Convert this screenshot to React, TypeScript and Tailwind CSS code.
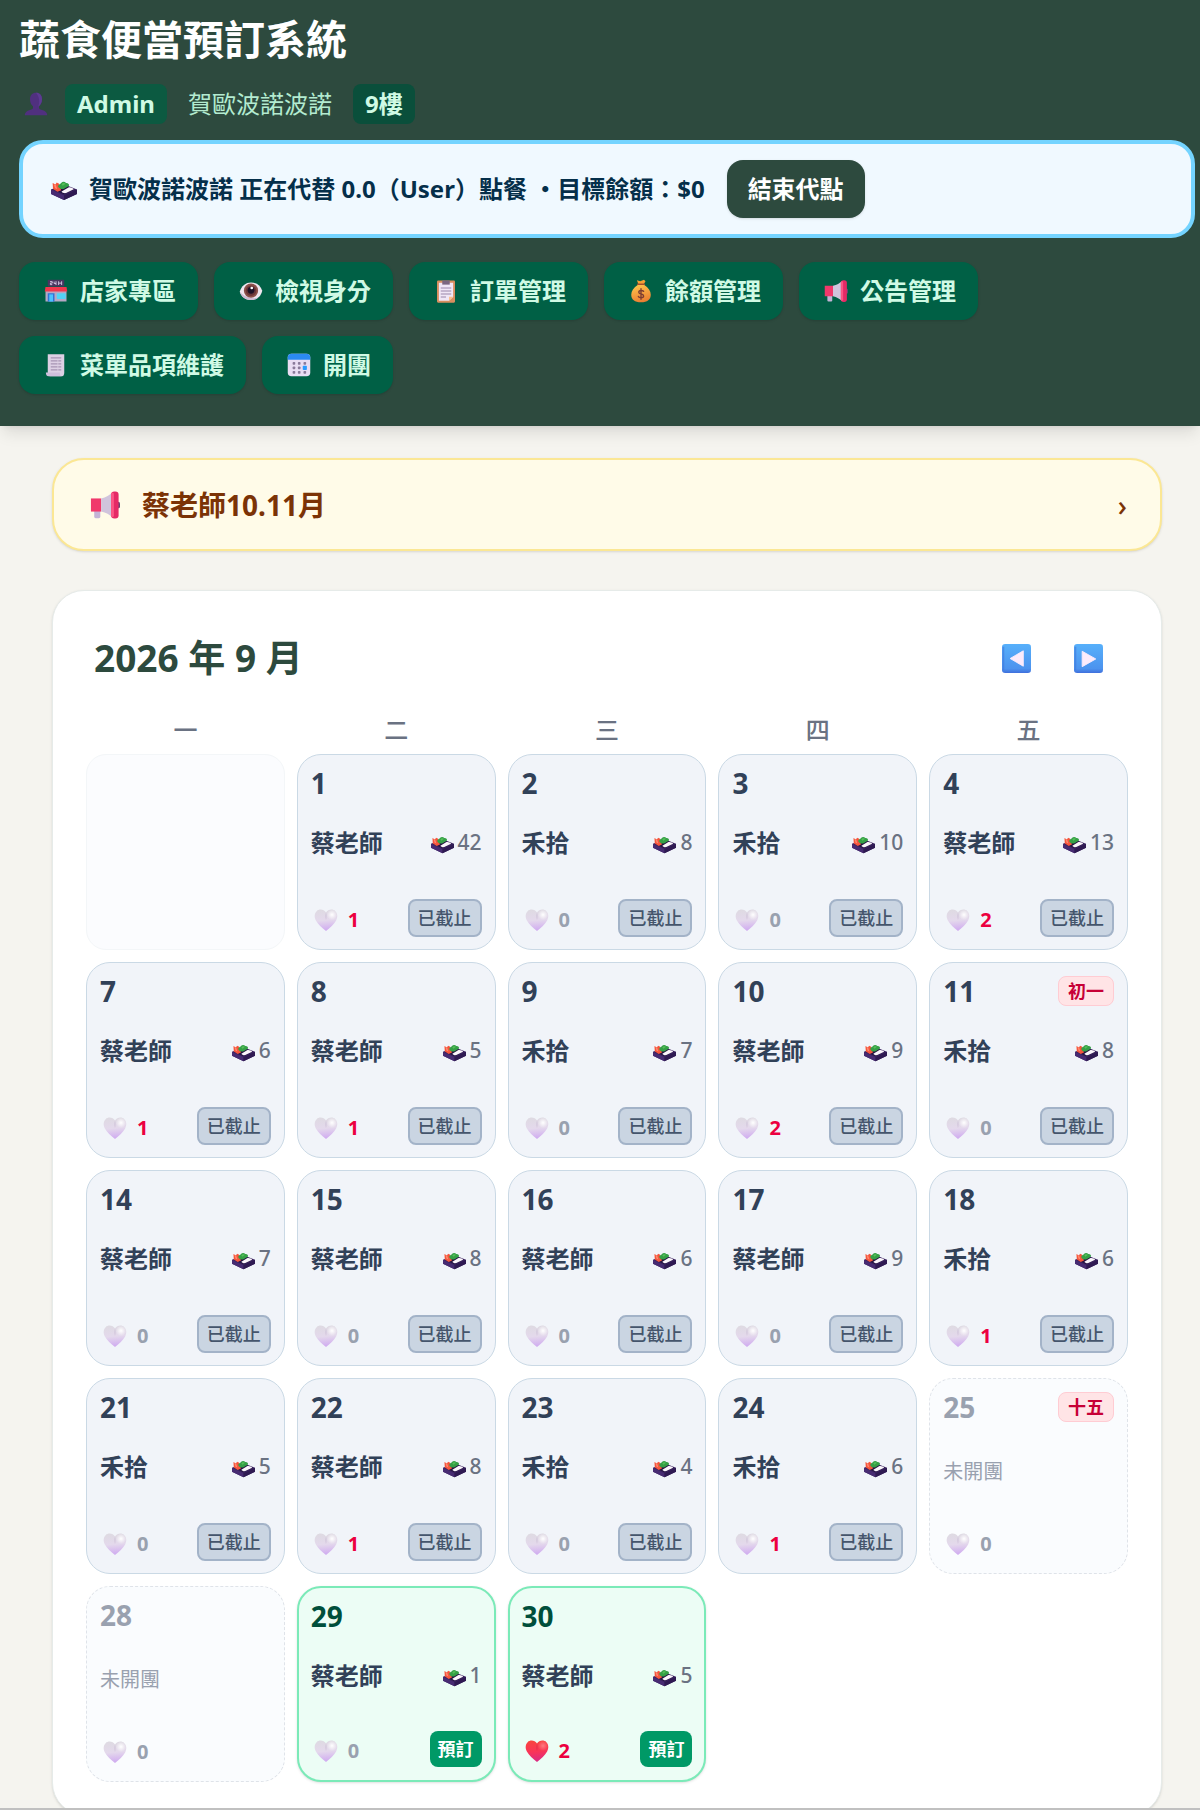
import type { ReactNode } from 'react';
import { clsx } from 'clsx';

type DayStatus = 'closed' | 'open' | 'none';

interface Day {
  date: number;
  status: DayStatus;
  shop?: string;
  orders?: number;
  likes: number;
  liked?: boolean;
  lunar?: string;
}

const closed = (date: number, shop: string, orders: number, likes: number, lunar?: string): Day => ({
  date,
  status: 'closed',
  shop,
  orders,
  likes,
  lunar,
});

const days: Day[] = [
  closed(1, '蔡老師', 42, 1),
  closed(2, '禾拾', 8, 0),
  closed(3, '禾拾', 10, 0),
  closed(4, '蔡老師', 13, 2),
  closed(7, '蔡老師', 6, 1),
  closed(8, '蔡老師', 5, 1),
  closed(9, '禾拾', 7, 0),
  closed(10, '蔡老師', 9, 2),
  closed(11, '禾拾', 8, 0, '初一'),
  closed(14, '蔡老師', 7, 0),
  closed(15, '蔡老師', 8, 0),
  closed(16, '蔡老師', 6, 0),
  closed(17, '蔡老師', 9, 0),
  closed(18, '禾拾', 6, 1),
  closed(21, '禾拾', 5, 0),
  closed(22, '蔡老師', 8, 1),
  closed(23, '禾拾', 4, 0),
  closed(24, '禾拾', 6, 1),
  { date: 25, status: 'none', likes: 0, lunar: '十五' },
  { date: 28, status: 'none', likes: 0 },
  { date: 29, status: 'open', shop: '蔡老師', orders: 1, likes: 0 },
  { date: 30, status: 'open', shop: '蔡老師', orders: 5, likes: 2, liked: true },
];

const weekdays = ['一', '二', '三', '四', '五'];

function Svg({ className, children }: { className?: string; children: ReactNode }) {
  return (
    <svg viewBox="0 0 32 32" aria-hidden="true" className={clsx('shrink-0', className)}>
      {children}
    </svg>
  );
}

function BentoIcon({ className }: { className?: string }) {
  return (
    <Svg className={className}>
      <path d="M0 16.500 16 10l16 6.500v5.500L16 29.500 0 22z" fill="#3a2260" />
      <path d="M0 16.500 16 24v5.500L0 22z" fill="#472b72" />
      <path d="M16 24 32 16.500V22l-16 7.500z" fill="#2f1a52" />
      <path d="M3 16.500 16 11l13 5.500-13 6z" fill="#241240" />
      <path d="M13 19 21.500 14c2-.8 6 .8 6.500 2.200L18.500 21c-2 .6-5-.6-5.500-2z" fill="#fbf6fc" />
      <path d="M2 8.500l3.500 2L7 8l3 1.500 2.500 8-4.500 2-5.500-3.500z" fill="#f5553c" />
      <path d="M3.500 10l2.500 1 1.500 5-2.500-1z" fill="#ff8a70" />
      <path d="M8.500 12.500c.5-2 3-2.500 4-4 1.500-2 4.500-2 6 0 2.500-.2 4.500 1.500 3.500 3.700L15.500 16c-3.500.4-6-1-7-3.500z" fill="#35a046" />
      <path d="M13 10c1.500-1.700 4-1.700 5-.5l-3.500 2.500z" fill="#56c05a" />
    </Svg>
  );
}

function HeartIcon({ liked }: { liked?: boolean }) {
  const id = liked ? 'heart-on' : 'heart-off';
  return (
    <Svg className="size-6">
      <defs>
        <linearGradient id={id} x1="0.4" y1="0" x2="0.5" y2="1">
          <stop offset="0" stopColor={liked ? '#f8443f' : '#dedae2'} />
          <stop offset="0.5" stopColor={liked ? '#fa3556' : '#e4d9ec'} />
          <stop offset="1" stopColor={liked ? '#d92a86' : '#cfa9f0'} />
        </linearGradient>
        <radialGradient id={`${id}-shine`} cx="0.5" cy="0.5" r="0.5">
          <stop offset="0" stopColor={liked ? '#ff7a80' : '#ffffff'} />
          <stop offset="1" stopColor={liked ? '#ff7a80' : '#ffffff'} stopOpacity="0" />
        </radialGradient>
      </defs>
      <path
        d="M16 6C13.500 1.800 7 .8 3.500 4.200.2 7.500.3 12.500 2.500 16.500 5.300 21.500 10.500 26.500 16 30.500c5.500-4 10.700-9 13.500-14 2.200-4 2.300-9-1-12.300C25 .8 18.500 1.800 16 6z"
        fill={`url(#${id})`}
      />
      <ellipse cx="24" cy="9" rx="7" ry="7" fill={`url(#${id}-shine)`} />
      <path d="M16 6c-1.200 3-1.200 7 0 10 1-3 1-7 0-10z" fill={liked ? '#d52a4c' : '#c7b9d2'} opacity="0.6" />
    </Svg>
  );
}

function MegaphoneIcon({ className }: { className?: string }) {
  return (
    <Svg className={className}>
      <rect x="28" y="12.500" width="4" height="7" rx="2" fill="#6b4674" />
      <path d="M4.500 22h6.500v6.500a1.500 1.500 0 0 1-1.500 1.500H6a1.500 1.500 0 0 1-1.500-1.500z" fill="#c3b3d6" />
      <path d="M1 9h11v14H1z" fill="#f0386b" />
      <path d="M12 9c5-1 9-3.500 12-6.500v27C21 26.500 17 24 12 23z" fill="#d0c4dc" />
      <rect x="22.500" y="1.500" width="8" height="29" rx="3.500" fill="#e52a66" />
      <rect x="22.500" y="3" width="3" height="26" rx="1.500" fill="#fb5584" />
    </Svg>
  );
}

function UserIcon() {
  return (
    <Svg className="size-6">
      <path d="M16 1c5 0 8 3.500 8 8.500 0 4-1.500 7.500-4 9.500v2c0 1.500 1 2 4 3 4.500 1.300 7 3.500 7 7H1c0-3.500 2.500-5.700 7-7 3-1 4-1.500 4-3v-2c-2.500-2-4-5.500-4-9.500C8 4.500 11 1 16 1z" fill="#50307f" />
      <path d="M16 1c5 0 8 3.500 8 8.500 0 4-2 8-5 10 2-6 2-12-3-18.500z" fill="#5d3a92" />
    </Svg>
  );
}

function StoreIcon() {
  return (
    <Svg className="size-6">
      <rect x="5" y="1" width="22" height="9" rx="1" fill="#4a3560" />
      <path d="M8 3.500h3v2H8.500v2H11M13.500 3.500v2.500H16M16 3v5M19.500 3v5M23.500 3v5M19.500 5.500h4" stroke="#d9cde6" strokeWidth="1.200" fill="none" />
      <rect x="2" y="15" width="28" height="15" fill="#b6a8c4" />
      <path d="M2 10.500h28l1 6H1z" fill="#f3364d" />
      <rect x="5" y="19" width="9" height="11" fill="#2f73d8" />
      <rect x="7" y="20.500" width="5" height="9.500" fill="#4cc2ff" />
      <rect x="17" y="19" width="12" height="7.500" rx="1" fill="#52d3f5" />
    </Svg>
  );
}

function EyeIcon() {
  return (
    <Svg className="size-6">
      <path d="M1 17C3 9 9 4.500 16 4.500S29 9 31 15.500C29.500 22.500 24 28 16 28S3 23.500 1 17z" fill="#efe6f0" />
      <path d="M1 17c2 7 8 11 15 11 4 0 7-1.200 9.500-3.500C18 27 8 25 1 17z" fill="#cdb9d3" />
      <circle cx="16" cy="15.500" r="9.500" fill="#8a4f49" />
      <circle cx="16" cy="15.500" r="7" fill="#6a3538" />
      <circle cx="16" cy="15" r="4.500" fill="#1d1127" />
      <circle cx="17" cy="12" r="1.800" fill="#fff" />
    </Svg>
  );
}

function ClipboardIcon() {
  return (
    <Svg className="size-6">
      <rect x="4" y="2" width="24" height="29.500" rx="1.500" fill="#d98e5f" />
      <path d="M6.500 5h19v19l-5.500 5H6.500z" fill="#f0e6f6" />
      <path d="M25.500 23.500 20 29v-5.500z" fill="#fbc08c" />
      <path d="M11 2h10v5.500H11z" fill="#7b6680" />
      <path d="M9 12h14M9 16h14M9 20h14M9 24h7" stroke="#9a86aa" strokeWidth="1.500" />
    </Svg>
  );
}

function MoneyBagIcon() {
  return (
    <Svg className="size-6">
      <defs>
        <linearGradient id="bag" x1="0.3" y1="0" x2="0.6" y2="1">
          <stop offset="0" stopColor="#ffc44a" />
          <stop offset="1" stopColor="#ea7c32" />
        </linearGradient>
      </defs>
      <path d="M10.500 1.500 15 3l5-2 2 2-3 5h-6z" fill="#f7a035" />
      <path d="M12 7.500h8c6 3.500 9 8.500 9 13.500 0 6.500-4.500 10-13 10S3 27.500 3 21c0-5 3-10 9-13.500z" fill="url(#bag)" />
      <path d="M11.500 7h9" stroke="#a6502c" strokeWidth="2" strokeLinecap="round" />
      <path d="M19.500 16.500c-1-1.500-6.500-2-6.500 1.200 0 3 6.500 1.600 6.500 4.800 0 3-6 3-7 .8M16 13v14" stroke="#7c3c32" strokeWidth="1.800" fill="none" strokeLinecap="round" />
    </Svg>
  );
}

function ReceiptIcon() {
  return (
    <Svg className="size-6">
      <path d="M5 1.500h22v24.500c0 3-1 5-3 5H8c-2 0-3-2-3-4z" fill="#ddd0e4" />
      <path d="M2.500 26H21c0 3 1 5 3 5H6c-2.500 0-3.500-2-3.500-5z" fill="#d0bfdc" />
      <path d="M9 6.500h14M9 10.500h14M9 14.500h14M9 18.500h14M9 22.500h14" stroke="#a794b3" strokeWidth="1.600" />
      <path d="M18.500 9v15" stroke="#ddd0e4" strokeWidth="1" />
    </Svg>
  );
}

function CalendarIcon() {
  return (
    <Svg className="size-6">
      <rect x="1" y="1" width="30" height="30" rx="5" fill="#e9ddf3" />
      <path d="M6 1h20a5 5 0 0 1 5 5v3H1V6a5 5 0 0 1 5-5z" fill="#2b8af2" />
      <g fill="#8a7a9a">
        <rect x="7.500" y="12" width="3.500" height="3.500" rx="1" />
        <rect x="14.500" y="12" width="3.500" height="3.500" rx="1" />
        <rect x="22" y="12" width="3.500" height="3.500" rx="1" />
        <rect x="7.500" y="18" width="3.500" height="3.500" rx="1" />
        <rect x="14.500" y="18" width="3.500" height="3.500" rx="1" />
        <rect x="7.500" y="24" width="3.500" height="3.500" rx="1" />
        <rect x="14.500" y="24" width="3.500" height="3.500" rx="1" />
        <rect x="22" y="24" width="3.500" height="3.500" rx="1" />
      </g>
      <rect x="21" y="17" width="5.500" height="5.500" rx="1" fill="#2b9bff" />
    </Svg>
  );
}

function ArrowIcon({ direction }: { direction: 'prev' | 'next' }) {
  return (
    <Svg className="size-[29px]">
      <defs>
        <linearGradient id={`arrow-${direction}`} x1="0" y1="0" x2="0" y2="1">
          <stop offset="0" stopColor="#57b0fb" />
          <stop offset="0.85" stopColor="#4c93ee" />
          <stop offset="1" stopColor="#3f6fdc" />
        </linearGradient>
      </defs>
      <rect width="32" height="32" rx="3.500" fill={`url(#arrow-${direction})`} />
      <path d="M1.500 3v26" stroke="#3f78dd" strokeWidth="2" opacity="0.6" />
      <path
        d={direction === 'prev' ? 'M9 16 23.500 7.500v17z' : 'M24 16.500 9 8v17z'}
        fill="#fcebfb"
        stroke="#fcebfb"
        strokeWidth="1"
        strokeLinejoin="round"
      />
    </Svg>
  );
}

const navItems = [
  { label: '店家專區', icon: <StoreIcon /> },
  { label: '檢視身分', icon: <EyeIcon /> },
  { label: '訂單管理', icon: <ClipboardIcon /> },
  { label: '餘額管理', icon: <MoneyBagIcon /> },
  { label: '公告管理', icon: <MegaphoneIcon className="size-6" /> },
  { label: '菜單品項維護', icon: <ReceiptIcon /> },
  { label: '開團', icon: <CalendarIcon /> },
];

function Header() {
  return (
    <header className="relative bg-[#2d4a3e] pt-[15px] pr-[5px] pb-8 pl-[19px] shadow-lg">
      <h1 className="text-[41px] leading-[48px] font-bold text-white">蔬食便當預訂系統</h1>

      <div className="mt-[21px] flex h-10 items-center text-2xl text-[#b3ebd0]">
        <span className="flex w-[46px] pl-[5px]">
          <UserIcon />
        </span>
        <span className="flex h-10 items-center rounded-lg bg-[#0c5a41] px-3 font-bold text-[#d0fae5]">Admin</span>
        <span className="mx-[21px]">賀歐波諾波諾</span>
        <span className="flex h-10 items-center rounded-lg bg-[#0a4f3b] px-3 font-bold text-[#d0fae5]">9樓</span>
      </div>

      <div className="mt-4 flex items-center rounded-[24px] border-4 border-[#74d4ff] bg-[#f0f9ff] px-7 py-4">
        <BentoIcon className="size-[26px]" />
        <p className="ml-3 text-2xl font-bold text-[#052f4a]">賀歐波諾波諾 正在代替 0.0（User）點餐 ・目標餘額：$0</p>
        <button type="button" className="ml-[22px] h-[58px] rounded-2xl bg-[#2d4a3e] px-[21px] text-2xl font-bold text-white shadow-sm">
          結束代點
        </button>
      </div>

      <nav className="mt-6 flex flex-wrap gap-4">
        {navItems.map((item) => (
          <button
            key={item.label}
            type="button"
            className="flex h-[58px] items-center gap-3 rounded-2xl bg-[#006045] pr-[22px] pl-[25px] text-2xl font-bold text-[#d0fae5] shadow-sm"
          >
            {item.icon}
            {item.label}
          </button>
        ))}
      </nav>
    </header>
  );
}

function DayCell({ day }: { day: Day }) {
  return (
    <div
      className={clsx(
        'flex h-[196px] flex-col rounded-[24px] py-3',
        day.status === 'closed' && 'border border-[#cad9e5] bg-[#f1f4f9] px-[13px]',
        day.status === 'open' && 'border-2 border-[#7beab8] bg-[#ecfdf5] px-3 shadow-sm',
        day.status === 'none' && 'border border-dashed border-[#dfe3e9] bg-[#fafcfe] px-[13px]',
      )}
    >
      <div className="flex h-8 items-center justify-between">
        <span
          className={clsx(
            'text-[28px] leading-8 font-bold',
            day.status === 'closed' && 'text-[#314158]',
            day.status === 'open' && 'text-[#004f3b]',
            day.status === 'none' && 'text-[#99a1af]',
          )}
        >
          {day.date}
        </span>
        {day.lunar && (
          <span className="flex h-[30px] items-center rounded-lg border border-[#ffccd3] bg-[#ffe4e6] px-[9px] text-lg font-bold text-[#c70036]">
            {day.lunar}
          </span>
        )}
      </div>

      {day.status === 'none' ? (
        <p className="mt-[33px] text-xl leading-8 text-[#99a1af]">未開團</p>
      ) : (
        <div className="mt-7 flex h-8 items-center justify-between">
          <span className="text-2xl font-bold text-[#314158]">{day.shop}</span>
          <span className="flex items-center gap-1 text-[21px] font-medium text-[#6a7282]">
            <BentoIcon className="size-[23px]" />
            {day.orders}
          </span>
        </div>
      )}

      <div className="mt-auto flex h-[38px] items-center justify-between">
        <button type="button" className="flex items-center gap-[10px] pt-1 pl-[3px] text-xl font-bold" aria-label={`${day.date} 日喜歡`}>
          <HeartIcon liked={day.liked} />
          <span className={day.likes > 0 ? 'text-[#ec003f]' : 'text-[#99a1af]'}>{day.likes}</span>
        </button>
        {day.status === 'closed' && (
          <span className="flex h-[38px] items-center rounded-lg border-2 border-[#a3b3c8] bg-[#cad5e2] px-2 text-lg font-medium text-[#45556c]">
            已截止
          </span>
        )}
        {day.status === 'open' && (
          <button type="button" className="h-9 rounded-lg bg-[#009966] px-2 text-lg font-bold text-white">
            預訂
          </button>
        )}
      </div>
    </div>
  );
}

export default function App() {
  return (
    <div className="flex h-screen flex-col overflow-hidden border-b-2 border-[#c0c0c0] bg-[#f5f4ef] font-['Noto_Sans','Noto_Sans_CJK_TC',sans-serif]">
      <Header />

      <main className="flex flex-col gap-[39px] pt-8 pr-[38px] pl-[52px]">
        <button
          type="button"
          className="flex h-[93px] w-full items-center rounded-[32px] border-2 border-[#fbe794] bg-[#fffbe8] pr-[33px] pl-9 text-[28px] font-bold text-[#7b3306] shadow-sm"
        >
          <MegaphoneIcon className="size-[30px]" />
          <span className="ml-[22px]">蔡老師10.11月</span>
          <span className="ml-auto font-medium">›</span>
        </button>

        <section className="rounded-[32px] border border-[#e6ebe9] bg-white px-[33px] pt-[33px] pb-8 shadow-sm">
          <div className="flex h-[68px] items-center justify-between px-2">
            <h2 className="text-[37px] font-bold text-[#2d4a3e]">2026 年 9 月</h2>
            <div className="flex gap-2">
              <button type="button" aria-label="上個月" className="flex size-16 items-center justify-center">
                <ArrowIcon direction="prev" />
              </button>
              <button type="button" aria-label="下個月" className="flex size-16 items-center justify-center">
                <ArrowIcon direction="next" />
              </button>
            </div>
          </div>

          <div className="mt-[14px] grid h-12 grid-cols-5 gap-3 text-center text-2xl leading-[48px] font-medium text-[#6a7282]">
            {weekdays.map((weekday) => (
              <span key={weekday}>{weekday}</span>
            ))}
          </div>

          <div className="grid grid-cols-5 gap-3">
            <div className="rounded-[20px] border border-[#f3f6f8] bg-[#fbfcfe]" />
            {days.map((day) => (
              <DayCell key={day.date} day={day} />
            ))}
          </div>
        </section>
      </main>
    </div>
  );
}
